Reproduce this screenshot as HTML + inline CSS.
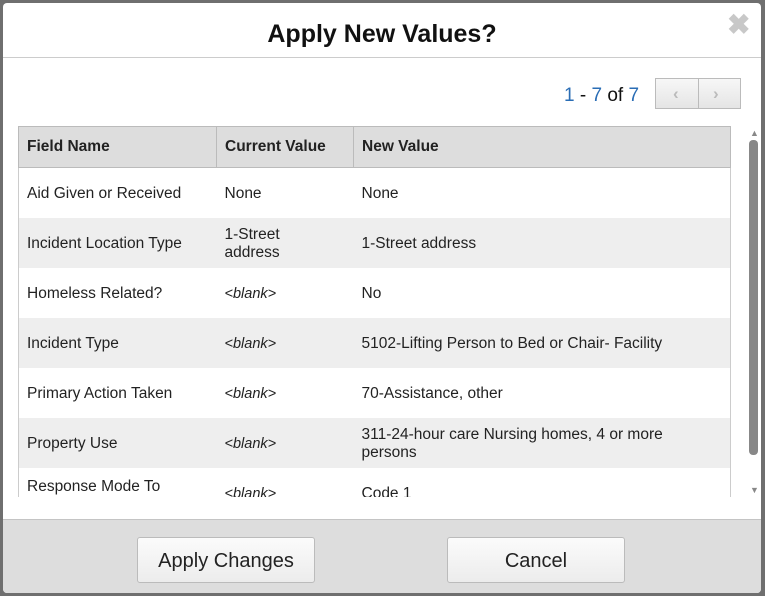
<!DOCTYPE html>
<html><head><style>
body{margin:0;width:765px;height:596px;background:#6f6f6f;font-family:"Liberation Sans",sans-serif;overflow:hidden;position:relative}
.m{position:absolute;left:3px;top:3px;width:758px;height:590px;background:#fff;border-radius:4px;overflow:hidden}
.t{position:absolute;left:0;right:0;top:17px;text-align:center;font-weight:bold;font-size:25px;color:#111}
.x{position:absolute;left:724px;top:8px;font-size:28px;font-weight:bold;color:#c8c8c8;line-height:28px}
.hl{position:absolute;left:0;right:0;top:54px;border-top:1px solid #ccc}
.pg{position:absolute;left:561px;top:82px;font-size:19px;color:#111}
.pg b{font-weight:normal;color:#2a6db5}
.pb{position:absolute;left:652px;top:75px;width:86px;height:31px;border:1px solid #bbb;background:linear-gradient(#f7f7f7,#e5e5e5);box-sizing:border-box}
.pb i{position:absolute;top:5px;font-style:normal;color:#bbb;font-size:17px;font-weight:bold}
.pb s{position:absolute;left:42px;top:0;bottom:0;border-left:1px solid #bbb}
.tw{position:absolute;left:15px;top:123px;width:714px;height:371px;overflow:hidden}
table{border-collapse:collapse;width:713px;font-size:15.5px;color:#222}
th{background:#ddd;text-align:left;height:40px;padding:0 8px;border:1px solid #bbb;font-size:15.5px}
td{height:50px;padding:3px 8px 0;line-height:18px;box-sizing:border-box}
tr.g td{background:#eee}
td:first-child{border-left:1px solid #ccc}td:last-child{border-right:1px solid #ccc;padding-right:50px}
em{font-size:14.5px}
.sb{position:absolute;left:746px;top:137px;width:9px;height:315px;background:#888;border-radius:4px}
.f{position:absolute;left:0;right:0;top:516px;bottom:0;background:#ddd;border-top:1px solid #c4c4c4}
.btn{position:absolute;top:17px;width:178px;height:46px;border:1px solid #bbb;border-radius:3px;background:linear-gradient(#fbfbfb,#ececec);font-size:20px;color:#222;text-align:center;line-height:46px;box-sizing:border-box}
</style></head><body>
<div class="m">
<div class="t">Apply New Values?</div>
<div class="x">✖</div>
<div class="hl"></div>
<div class="pg"><b>1</b> - <b>7</b> of <b>7</b></div>
<div class="pb"><i style="left:17px">‹</i><s></s><i style="left:57px">›</i></div>
<div class="tw"><table>
<tr><th style="width:181px">Field Name</th><th style="width:120px">Current Value</th><th>New Value</th></tr>
<tr><td>Aid Given or Received</td><td>None</td><td>None</td></tr>
<tr class="g"><td>Incident Location Type</td><td>1-Street<br>address</td><td>1-Street address</td></tr>
<tr><td>Homeless Related?</td><td><em>&lt;blank&gt;</em></td><td>No</td></tr>
<tr class="g"><td>Incident Type</td><td><em>&lt;blank&gt;</em></td><td>5102-Lifting Person to Bed or Chair- Facility</td></tr>
<tr><td>Primary Action Taken</td><td><em>&lt;blank&gt;</em></td><td>70-Assistance, other</td></tr>
<tr class="g"><td>Property Use</td><td><em>&lt;blank&gt;</em></td><td>311-24-hour care Nursing homes, 4 or more persons</td></tr>
<tr><td style="vertical-align:top;padding-top:10px">Response Mode To</td><td><em>&lt;blank&gt;</em></td><td>Code 1</td></tr>
</table></div>
<div style="position:absolute;left:747px;top:125px;font-size:9px;color:#888">▲</div>
<div class="sb"></div>
<div style="position:absolute;left:747px;top:482px;font-size:9px;color:#888">▼</div>
<div class="f">
<div class="btn" style="left:134px">Apply Changes</div>
<div class="btn" style="left:444px">Cancel</div>
</div>
</div>
</body></html>
